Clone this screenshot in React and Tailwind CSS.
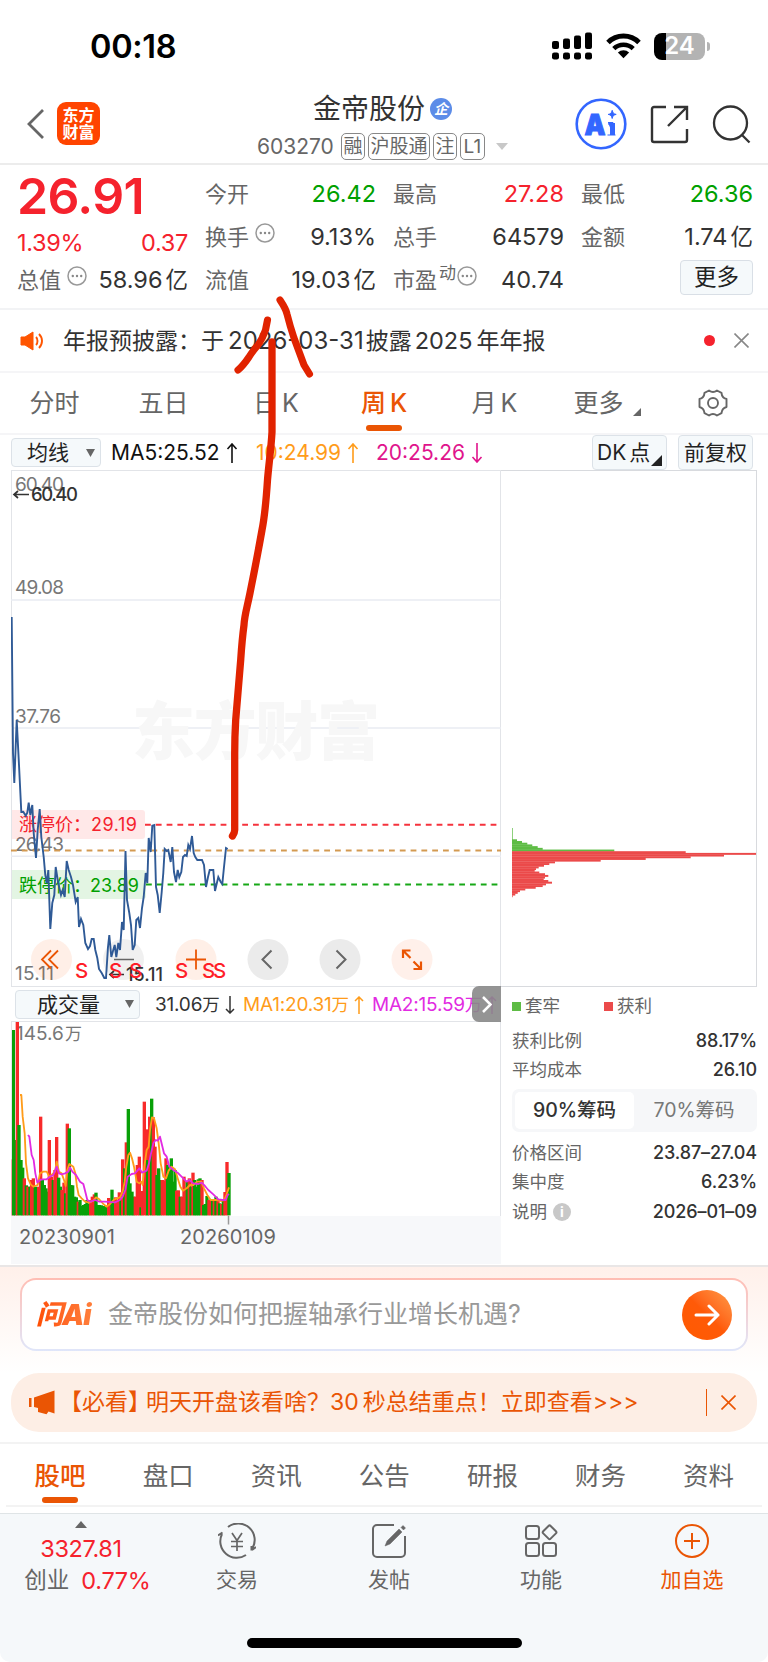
import React from 'react';

const priceLine =
    "11.7,617 13,753 14.3,783 16.7,720 19,765 21.3,812 23.3,811.7 25.7,815.7 27.3,812.7 28.7,802.7 30.3,815 32.3,805 33.7,833 36,858 37.7,830 39.7,809 41.3,837 43.7,857 45.3,875 47,883 48.3,870 50.3,929 52.3,903 54.3,895 55.7,867 58,882 61,895 62.7,890 64.7,897 66.7,861 68.7,870 71,877 73,885 75.7,902 77.7,897 79,927 81,919 83.3,925 85.3,943 88,949 90,946 91.7,939 93.7,939 95.3,950 97.3,958 99,969 101.7,973 104.3,978 106,978 108,947 109.3,935 111.3,957 114.7,945 116.3,957 118.3,943 120,950 122,922 123.7,930 125.5,851 127,900 129.3,913 131,925 132.7,950 134.7,945 136.3,920 138.3,918 140,928 142,908 143.7,897 145.7,873 147.3,883 148.7,838 150.7,852 152.3,825.7 154.3,825 156,887 157.7,895 159.7,913 161.7,892 163.3,873 164.7,849 166.7,851 168.3,850 170.7,862 172.3,847 174,872 176,882 177.7,870 179.3,877 181.3,872 183,857 185,855 186.7,856 188.3,845 190,849 192,836 193.7,853 195.3,857 197.3,860 202,860 204,865 206,887 208,877 209.7,870 213.3,870 215,891 218.3,877 220.7,882 222.3,884 224,867 226,848 227.7,849";

// [x, top, up] in chart pixels times three, baseline at 646
const volumes = [
    [38, 478, 1], [41, 90, 0], [47, 420, 0], [52, 66, 1], [57, 375, 0], [63, 480, 0], [68, 503, 0], [73, 535, 1], [79, 556, 0], [84, 560, 1],
    [90, 560, 0], [95, 540, 1], [100, 535, 1], [106, 560, 0], [111, 590, 0], [116, 560, 1], [122, 350, 1], [127, 540, 0], [133, 555, 0], [138, 565, 0],
    [143, 575, 0], [148, 420, 1], [154, 530, 1], [160, 540, 0], [165, 510, 1], [170, 411, 1], [176, 533, 0], [181, 560, 0], [186, 570, 1], [192, 548, 1],
    [197, 580, 0], [202, 371, 1], [208, 385, 0], [213, 555, 0], [218, 556, 0], [224, 590, 0], [229, 592, 0], [235, 605, 1], [240, 600, 0], [245, 618, 0],
    [251, 615, 0], [256, 612, 0], [261, 600, 0], [267, 612, 0], [272, 600, 1], [277, 590, 1], [283, 583, 1], [288, 578, 0], [294, 615, 0], [299, 615, 0],
    [304, 616, 0], [310, 618, 0], [315, 620, 0], [320, 620, 0], [326, 594, 1], [331, 605, 1], [336, 569, 0], [342, 600, 0], [347, 592, 1], [352, 600, 1],
    [358, 577, 1], [363, 600, 0], [368, 478, 1], [374, 505, 0], [379, 427, 1], [385, 327, 0], [390, 550, 0], [396, 575, 0], [401, 590, 0], [406, 590, 1],
    [412, 495, 1], [418, 470, 1], [423, 622, 0], [428, 573, 1], [433, 305, 1], [440, 388, 1], [443, 480, 0], [449, 350, 1], [455, 296, 0], [460, 352, 1],
    [465, 440, 1], [471, 525, 0], [476, 505, 0], [481, 540, 0], [487, 540, 1], [492, 542, 1], [498, 475, 1], [503, 495, 0], [508, 500, 0], [514, 475, 0],
    [519, 545, 0], [525, 510, 0], [530, 572, 1], [535, 571, 1], [541, 590, 0], [546, 590, 1], [552, 530, 1], [557, 570, 1], [562, 545, 0], [568, 535, 1],
    [573, 560, 0], [579, 518, 1], [584, 540, 0], [589, 560, 0], [595, 538, 0], [600, 535, 0], [606, 540, 1], [611, 615, 0], [616, 612, 0], [621, 588, 0],
    [627, 600, 1], [632, 598, 1], [638, 602, 0], [643, 600, 1], [648, 590, 0], [654, 600, 1], [659, 610, 0], [665, 612, 1], [670, 600, 0], [675, 576, 1],
    [681, 486, 1], [687, 519, 0],
];

const ma1 =
    "60,285 64,285 68,350 74,400 78,490 84,535 92,553 100,560 113,555 120,520 130,515 140,515 148,530 158,522 165,515 170,485 177,515 185,520 192,540 197,558 202,510 208,492 220,500 226,520 231,560 236,585 245,595 255,605 268,608 280,602 288,592 297,597 310,612 320,620 330,612 343,598 360,592 368,575 374,545 379,500 385,465 390,458 396,475 402,500 410,545 418,550 424,545 428,555 433,500 440,450 446,440 450,390 456,352 462,355 470,385 476,430 482,490 490,530 498,535 506,512 515,500 525,508 533,535 541,560 549,572 560,565 570,555 580,555 592,545 604,545 612,565 622,585 632,600 650,600 665,603 673,600 679,585 687,562";
const ma2 =
    "84,405 88,410 95,465 101,480 106,520 112,548 120,540 128,538 140,538 150,530 160,525 170,500 177,520 185,523 195,520 205,515 210,502 217,515 228,525 240,545 250,552 257,580 262,600 272,605 285,600 298,605 315,605 345,607 360,600 368,590 376,570 383,530 395,522 405,520 418,505 426,518 440,512 447,490 452,465 460,430 467,420 473,422 480,410 486,435 492,460 500,470 508,500 520,510 535,520 550,535 560,545 568,540 580,550 595,552 605,548 615,558 625,570 640,583 655,598 668,600 677,600 683,585 687,582";

const greenChips = [5, 10, 15.3, 20.3, 25.7, 30.7, 102.3];
const redChips = [173.7, 244, 212, 178.7, 133.7, 88.7, 43, 37.3, 32, 26.7, 24, 22.7, 27.3, 33, 36.3, 33, 31.7, 36.3, 40, 34, 30.7, 23.7, 13.3, 8, 5.7, 3.3, 0.7];

const Dots = ({ className = "" }) => (
    <svg className={`shrink-0 ${className}`} width="20" height="20" viewBox="0 0 20 20" fill="none">
        <circle cx="10" cy="10" r="9" stroke="#999" strokeWidth="1.5" />
        <circle cx="5.8" cy="10" r="1.2" fill="#888" />
        <circle cx="10" cy="10" r="1.2" fill="#888" />
        <circle cx="14.2" cy="10" r="1.2" fill="#888" />
    </svg>
);

const Cross = ({ size = 15, color = "#888" }) => (
    <svg width={size} height={size} viewBox="0 0 15 15" stroke={color} strokeWidth="1.6">
        <path d="M.5.5l14 14M14.5.5l-14 14" />
    </svg>
);

const StatusBar = () => (
    <div className="flex h-[80px] items-start justify-between pl-[90px] pr-[58px] pt-[30px]">
        <span className="text-[32.5px] font-semibold leading-[34px] tracking-[-0.3px] text-black">00:18</span>
        <div className="flex items-center gap-[13px] pt-[2px]">
            <svg width="41" height="28" viewBox="0 0 41 28">
                {[0, 11, 22, 33].map((x, i) => (
                    <g key={x}>
                        <rect x={x} y={[9, 6.5, 3.5, 0.5][i]} width="7" height={[8, 10.5, 13.5, 16.5][i]} rx="2" />
                        <rect x={x} y="20.5" width="7" height="7" rx="2.2" />
                    </g>
                ))}
            </svg>
            <svg width="35" height="26" viewBox="0 0 35 26" fill="none" stroke="#000" strokeWidth="5">
                <path d="M2 9.5a22 22 0 0 1 31 0" />
                <path d="M7.8 15.7a14 14 0 0 1 19.4 0" strokeWidth="4.6" />
                <path d="M17.5 25.3l-5.6-5.8a8 8 0 0 1 11.2 0z" fill="#000" stroke="none" />
            </svg>
            <div className="flex items-center gap-[2px]">
                <div className="flex h-[27px] w-[51px] items-center justify-center overflow-hidden rounded-[8px] bg-[linear-gradient(90deg,#000_24%,#b3b3b3_24%)] text-[24px] font-semibold leading-none text-white">24</div>
                <div className="h-[9px] w-[3px] rounded-r-full bg-[#b3b3b3]" />
            </div>
        </div>
    </div>
);

const Tag = ({ children }) => (
    <span className="flex h-[27px] items-center rounded-[5px] border border-[#888] px-[1.5px] text-[19px] leading-none text-[#666]">{children}</span>
);

const Header = () => (
    <div className="flex h-[85px] items-start border-b-2 border-[#ececec] pl-[26px] pr-[17px]">
        <div className="flex w-[231px] items-center gap-[12px] pt-[22px]">
            <svg width="19" height="32" viewBox="0 0 19 32" fill="none" stroke="#666" strokeWidth="2.8">
                <path d="M17 2L3 16l14 14" />
            </svg>
            <div className="flex h-[43px] w-[43px] flex-col items-center justify-center rounded-[9px] bg-[#ff4400] text-[16px] font-bold leading-[17px] text-white">
                <span>东方</span>
                <span>财富</span>
            </div>
        </div>
        <div className="flex w-[255px] flex-col">
            <div className="flex items-center gap-[5px] pl-[56px] pt-[14px]">
                <span className="text-[28px] leading-[30px] text-[#333]">金帝股份</span>
                <span className="flex h-[22px] w-[22px] items-center justify-center rounded-full bg-[#5c8ce8] text-[14px] font-bold italic leading-none text-white">企</span>
            </div>
            <div className="mt-[9px] flex items-center gap-[3px]">
                <span className="mr-[3px] w-[78px] text-[21px] leading-none text-[#666]">603270</span>
                <Tag>融</Tag>
                <Tag>沪股通</Tag>
                <Tag>注</Tag>
                <Tag><span className="px-[1px]">L1</span></Tag>
                <svg className="ml-[8px]" width="12" height="7" viewBox="0 0 12 7"><path d="M0 0h12L6 7z" fill="#c8c8c8" /></svg>
            </div>
        </div>
        <div className="ml-auto flex items-center pt-[18px]">
            <svg width="52" height="52" viewBox="0 0 52 52">
                <circle cx="26" cy="26" r="24.3" fill="none" stroke="#3366ff" strokeWidth="2.6" />
                <text x="9.5" y="37" fontSize="29" fontWeight="900" fill="#3366ff" stroke="#3366ff" strokeWidth="1" textLength="21" lengthAdjust="spacingAndGlyphs">A</text>
                <path d="M33 24.500h5V37M32.500 37h8M37.200 12.300c.7 2.900 1.500 3.600 4 4.100-2.500.5-3.300 1.200-4 4.100-.7-2.900-1.500-3.600-4-4.100 2.500-.5 3.300-1.200 4-4.100z" fill="#3366ff" stroke="#3366ff" strokeWidth="1" strokeLinejoin="round" />
                <path d="M33.500 25.500h3V37M38.500 25v12" fill="none" stroke="#3366ff" strokeWidth="3" />
            </svg>
            <svg className="ml-[23px]" width="39" height="39" viewBox="0 0 39 39" fill="none" stroke="#333" strokeWidth="2.4">
                <path d="M16 2H4a2 2 0 0 0-2 2v31a2 2 0 0 0 2 2h31a2 2 0 0 0 2-2V24M18 21L36.5 2.5M24 2h13v13" />
            </svg>
            <svg className="ml-[23px]" width="39" height="39" viewBox="0 0 39 39" fill="none" stroke="#333" strokeWidth="2.3">
                <circle cx="18.5" cy="18" r="16.5" />
                <path d="M29.5 29.5l8 8" />
            </svg>
        </div>
    </div>
);

const Stat = ({ label, value, unit, color = "text-[#333]", dots, sup }) => (
    <div className="flex h-[43px] items-center justify-between">
        <span className="flex items-center text-[22px] leading-none text-[#666]">
            {label}
            {sup && <span className="-mt-[12px] ml-[2px] text-[17px]">{sup}</span>}
            {dots && <Dots className={sup ? "-mt-[8px] ml-[1px]" : "-mt-[8px] ml-[6px]"} />}
        </span>
        <span className={`text-[23.5px] leading-none ${color}`}>
            {value}
            {unit && <span className="ml-[3px] text-[22.5px]">{unit}</span>}
        </span>
    </div>
);

const Quote = () => (
    <div className="flex h-[145px] gap-[17px] border-b-2 border-[#f2f3f5] pl-[17px] pr-[15px] pt-[7px]">
        <div className="w-[171px]">
            <div className="pt-[5px] text-[50px] font-semibold leading-[38px] tracking-[-0.6px] text-[#f5222d]">26.91</div>
            <div className="flex justify-between pt-[16px] text-[23.5px] leading-[23px] tracking-[-0.3px] text-[#f5222d]">
                <span>1.39%</span>
                <span>0.37</span>
            </div>
            <div className="pt-[4px]"><Stat label="总值" value="58.96" unit="亿" dots /></div>
        </div>
        <div className="w-[171px]">
            <Stat label="今开" value="26.42" color="text-[#00a000]" />
            <Stat label="换手" value="9.13%" dots />
            <Stat label="流值" value="19.03" unit="亿" />
        </div>
        <div className="w-[171px]">
            <Stat label="最高" value="27.28" color="text-[#f5222d]" />
            <Stat label="总手" value="64579" />
            <Stat label="市盈" sup="动" value="40.74" dots />
        </div>
        <div className="w-[172px]">
            <Stat label="最低" value="26.36" color="text-[#00a000]" />
            <Stat label="金额" value="1.74" unit="亿" />
            <div className="flex justify-end pt-[2px]">
                <button className="h-[35px] w-[73px] rounded-[4px] border border-[#d9dfe6] bg-[#f5f9fb] text-[22.5px] leading-none text-[#222]">更多</button>
            </div>
        </div>
    </div>
);

const Notice = () => (
    <div className="flex h-[63px] items-center border-b-2 border-[#f5f5f7] pl-[20px] pr-[19px]">
        <svg width="24" height="20" viewBox="0 0 24 20" fill="none" stroke="#ff5500" strokeWidth="1.9">
            <path d="M1 6h4l8-5v18l-8-5H1z" fill="#ff5500" strokeLinejoin="round" strokeWidth="1" />
            <path d="M16 6c2 2 2 6 0 8M19 3c4 4 4 10 0 14" />
        </svg>
        <span className="ml-[19px] whitespace-pre text-[23px] leading-none text-[#333]">年报预披露：于<span className="ml-[4px] mr-[2px] text-[24px]">2026-03-31</span>披露<span className="ml-[3px] mr-[4px] text-[23.5px]">2025</span>年年报</span>
        <span className="ml-auto mr-[19px] h-[11px] w-[11px] rounded-full bg-[#f5222d]" />
        <Cross />
    </div>
);

const periods = [
    { label: "分时", w: "w-[109px]" },
    { label: "五日", w: "w-[109px]" },
    { label: "日K", w: "w-[116px]" },
    { label: "周K", w: "w-[100px]", active: true },
    { label: "月K", w: "w-[121px]" },
    { label: "更多", w: "w-[87px]" },
];

const PeriodTabs = () => (
    <div className="flex h-[62px] items-center border-b-2 border-[#f5f5f7]">
        {periods.map((p) => (
            <div key={p.label} className={`relative flex justify-center text-[25px] leading-none ${p.w} ${p.active ? "font-medium text-[#ea5504]" : "text-[#666]"}`}>
                {p.label === "更多" ? <span>{p.label}</span> : p.label.replace("K", "")}
                {p.label.includes("K") && <span className="ml-[4px]">K</span>}
                {p.active && <span className="absolute -bottom-[15px] h-[6px] w-[36px] rounded-[3px] bg-[#ea5504]" />}
            </div>
        ))}
        <svg className="-ml-[9px] mt-[17px]" width="8" height="8" viewBox="0 0 8 8"><path d="M8 0v8H0z" fill="#666" /></svg>
        <svg className="ml-[57px]" width="30" height="28" viewBox="0 0 30 28" fill="none" stroke="#666" strokeWidth="1.9" strokeLinejoin="round">
            <path d="M11 1.5q4 3 8 0l4.5 2.3q.4 5 5 6.2v8q-4.600 1.200-5 6.200l-4.500 2.300q-4-3-8 0l-4.500-2.300q-.4-5-5-6.200v-8q4.600-1.200 5-6.200z" />
            <circle cx="15" cy="14" r="5" />
        </svg>
    </div>
);

const Arrow = ({ down }) => (
    <svg className="ml-[6px] inline-block align-[-3px]" width="12" height="20" viewBox="0 0 12 20" fill="none" stroke="currentColor" strokeWidth="1.6">
        <path d={down ? "M6 0v19M1.500 14l4.500 5 4.500-5" : "M6 20V1M1.500 6L6 1l4.500 5"} />
    </svg>
);

const Toolbar = () => (
    <div className="flex h-[35px] items-center pl-[11px] pr-[15px]">
        <button className="flex h-[29px] w-[90px] items-center justify-between rounded-[4px] border border-[#dce2e8] bg-[#f5f9fb] pl-[15px] pr-[5px] text-[21px] leading-none text-[#222]">
            均线
            <svg width="9" height="8" viewBox="0 0 9 8"><path d="M0 0h9L4.500 8z" fill="#666" /></svg>
        </button>
        <div className="flex text-[21px] leading-none">
            <span className="ml-[10px] w-[145px] text-[#111]">MA5:25.52<Arrow /></span>
            <span className="w-[120px] text-[#ff9c1a]">10:24.99<Arrow /></span>
            <span className="w-[110px] text-[#e0148c]">20:25.26<Arrow down /></span>
        </div>
        <button className="relative ml-auto flex h-[35px] w-[75px] items-center rounded-[4px] border border-[#dce2e8] bg-[#f5f9fb] pl-[4px] text-[21px] leading-none text-[#222]">
            DK<span className="ml-[3px]">点</span>
            <svg className="absolute bottom-[3px] right-[4px]" width="11" height="11" viewBox="0 0 11 11"><path d="M11 0v11H0z" fill="#222" /></svg>
        </button>
        <button className="ml-[11px] h-[35px] w-[75px] rounded-[4px] border border-[#dce2e8] bg-[#f5f9fb] text-[21px] leading-none text-[#222]">前复权</button>
    </div>
);

const PriceChart = () => (
    <svg className="block" width="490" height="517" viewBox="11 470 490 517" fill="none">
        <path d="M11 470.500h490M11.500 470v517M500.500 470v517M11 986.500h490" stroke="#e2e4e8" />
        <path d="M11 600h490M11 728h490M11 856.300h490" stroke="#e9ebf2" strokeWidth="1.500" />
        <text x="132" y="754" fontSize="63" fontWeight="900" fill="#f7f7f7" textLength="248">东方财富</text>
        <g fontSize="19" fill="#777">
            <text x="15" y="491" textLength="49">60.40</text>
            <text x="15" y="594" textLength="49">49.08</text>
            <text x="15" y="723" textLength="46">37.76</text>
            <text x="15" y="851" textLength="49">26.43</text>
            <text x="15" y="979.500" textLength="39">15.11</text>
        </g>
        <path d="M29 494.500H14M18 491l-4 3.500 4 3.500" stroke="#333" strokeWidth="1.700" />
        <text x="31" y="500.500" fontSize="18.500" fontWeight="500" fill="#333" textLength="47">60.40</text>
        <path d="M12 810h130a3 3 0 0 1 3 3v23a3 3 0 0 1-3 3H12z" fill="#ff2a2a" fillOpacity=".11" />
        <path d="M12 870h131a3 3 0 0 1 3 3v23a3 3 0 0 1-3 3H12z" fill="#00a000" fillOpacity=".11" />
        <text x="19" y="831" fontSize="18" fill="#f5222d">涨停价：<tspan x="91" textLength="46">29.19</tspan></text>
        <text x="19" y="891.500" fontSize="18" fill="#00a000">跌停价：<tspan x="90" textLength="49">23.89</tspan></text>
        <path d="M145 824.700h356" stroke="#f5323c" strokeWidth="1.900" strokeDasharray="5.800 5" />
        <path d="M11 850.500h490" stroke="#d39a52" strokeWidth="1.900" strokeDasharray="5.800 5" />
        <path d="M146 884.500h353" stroke="#17a817" strokeWidth="1.900" strokeDasharray="5.800 5" />
        <g>
            <circle cx="51.500" cy="959.500" r="20.500" fill="#ff6414" fillOpacity=".1" />
            <circle cx="123.500" cy="959.500" r="20.500" fill="#000" fillOpacity=".06" />
            <circle cx="196" cy="959.500" r="20.500" fill="#ff6414" fillOpacity=".1" />
            <circle cx="268" cy="959.500" r="20.500" fill="#ebebeb" />
            <circle cx="340" cy="959.500" r="20.500" fill="#ebebeb" />
            <circle cx="412" cy="959.500" r="20.500" fill="#fff0ea" />
            <path d="M51 950.500l-9 9 9 9M58 950.500l-9 9 9 9M186 959.500h20M196 949.500v20" stroke="#ea5504" strokeWidth="1.800" />
            <path d="M114 959.500h20" stroke="#666" strokeWidth="1.500" />
            <path d="M271.500 950.500l-9 9 9 9M336.500 950.500l9 9-9 9" stroke="#666" strokeWidth="2" />
            <path d="M403 958v-7.500h7.500M403 950.500l7.500 7.500M421 961.500v7.500h-7.500M421 969l-7.500-7.500" stroke="#ea5504" strokeWidth="2.200" />
        </g>
        <polyline points={priceLine} stroke="#2f5a96" strokeWidth="1.900" strokeLinejoin="miter" strokeMiterlimit="4" />
        <path d="M124 974.500h-14M114 971l-4 3.500 4 3.500" stroke="#333" strokeWidth="1.700" />
        <text x="126" y="981" fontSize="18" fontWeight="500" fill="#333" textLength="37">15.11</text>
        <g fontSize="20.500" fontWeight="500" fill="#ff1e28">
            {[75, 109, 129, 175, 202, 213].map((x) => (
                <text key={x} x={x} y="978">S</text>
            ))}
        </g>
    </svg>
);

const VolumeChart = () => (
    <svg className="block" width="490" height="204" viewBox="11 1021 490 204" fill="none">
        <path d="M11 1216h490v9H11z" fill="#f7f8fa" />
        <path d="M11 1021.500h490M11.500 1021v195M500.500 1021v195" stroke="#e2e4e8" />
        <text x="16" y="1039.500" fontSize="19" fill="#777">145.6<tspan x="65" fontSize="17">万</tspan></text>
        <g transform="translate(0 1000) scale(.33333)">
            {volumes.map(([x, top, up]) => (
                <rect key={x} x={Math.max(x - 5, 35)} y={top} width={x < 45 ? 9 : 10} height={646 - top} fill={up ? "#f82a2a" : "#08a008"} />
            ))}
            <polyline points={ma1} stroke="#ff9c1a" strokeWidth="5.500" strokeLinejoin="round" />
            <polyline points={ma2} stroke="#e22be2" strokeWidth="5.500" strokeLinejoin="round" />
        </g>
        <path d="M228.500 1216v8.500" stroke="#999" strokeWidth="1.500" />
    </svg>
);

const ChipChart = () => (
    <svg className="block" width="257" height="517" viewBox="501 470 257 517">
        <path d="M501 470.500h256M756.500 470v517M501 986.500h256" stroke="#d8dade" fill="none" />
        <rect x="512" y="828" width=".7" height="12" fill="#5ebc45" />
        {greenChips.map((w, i) => (
            <rect key={i} x="512" y={839.3 + i * 1.71} width={w} height="2" fill="#5ebc45" />
        ))}
        {redChips.map((w, i) => (
            <rect key={i} x="512" y={851.2 + i * 1.695} width={w} height="1.950" fill="#eb4a4a" />
        ))}
    </svg>
);

const SmallArrow = ({ down }) => (
    <svg className="ml-[5px] inline-block align-[-3px]" width="10" height="18" viewBox="0 0 10 18" fill="none" stroke="currentColor" strokeWidth="1.500">
        <path d={down ? "M5 0v17M1 13l4 4 4-4" : "M5 18V1M1 5l4-4 4 4"} />
    </svg>
);

const VolumeBar = () => (
    <div className="flex h-[34px] items-center pl-[4px]">
        <button className="flex h-[29px] w-[125px] items-center justify-between rounded-[4px] border border-[#dce2e8] bg-[#f5f9fb] pl-[21px] pr-[5px] text-[21px] leading-none text-[#222]">
            成交量
            <svg width="9" height="8" viewBox="0 0 9 8"><path d="M0 0h9L4.500 8z" fill="#666" /></svg>
        </button>
        <div className="flex whitespace-nowrap text-[19px] leading-none tracking-[-0.2px]">
            <span className="ml-[15px] w-[88px] text-[#333]">31.06<span className="text-[17.5px]">万</span><SmallArrow down /></span>
            <span className="w-[129px] text-[#ff9c1a]">MA1:20.31<span className="text-[17.5px]">万</span><SmallArrow /></span>
            <span className="w-[129px] text-[#e22be2]">MA2:15.59<span className="text-[17.5px]">万</span><SmallArrow /></span>
        </div>
        <div className="z-10 -ml-[29px] flex h-[36px] w-[29px] shrink-0 items-center justify-center rounded-l-[7px] bg-[#888]/90">
            <svg width="10" height="17" viewBox="0 0 10 17" fill="none" stroke="#fff" strokeWidth="2.500"><path d="M1 1l7.500 7.500L1 16" /></svg>
        </div>
    </div>
);

const Row = ({ label, value, children }) => (
    <div className="flex h-[29px] items-center justify-between leading-none">
        <span className="flex items-center text-[17.5px] text-[#666]">{label}{children}</span>
        <span className="text-[18px] font-medium tracking-[-0.1px] text-[#333]">{value}</span>
    </div>
);

const ChipPanel = () => (
    <div className="pl-[11px] pr-[1px]">
        <div className="flex h-[38px] items-center text-[17.5px] leading-none text-[#666]">
            <span className="mr-[4px] h-[9px] w-[9px] bg-[#5ebc45]" />套牢
            <span className="ml-[44px] mr-[4px] h-[9px] w-[9px] bg-[#eb4a4a]" />获利
        </div>
        <div className="pt-[1px]">
            <Row label="获利比例" value="88.17%" />
            <Row label="平均成本" value="26.10" />
        </div>
        <div className="mt-[5px] flex h-[43px] rounded-[7px] bg-[#f6f7f9] p-[3px] text-[19.5px] leading-none">
            <div className="flex w-[119px] items-center justify-center rounded-[5px] bg-white font-medium text-[#333]">90%筹码</div>
            <div className="flex flex-1 items-center justify-center text-[#777]">70%筹码</div>
        </div>
        <div className="pt-[6px]">
            <Row label="价格区间" value="23.87–27.04" />
            <Row label="集中度" value="6.23%" />
            <div className="pt-[1px]">
                <Row label="说明" value="2026–01–09">
                    <span className="ml-[6px] flex h-[18px] w-[18px] items-center justify-center rounded-full bg-[#c8c8c8] text-[14px] font-bold leading-none text-white">i</span>
                </Row>
            </div>
        </div>
    </div>
);

const Charts = () => (
    <div className="flex h-[795px] pl-[11px]">
        <div className="w-[490px]">
            <PriceChart />
            <VolumeBar />
            <VolumeChart />
            <div className="flex h-[39px] items-start bg-[#f7f8fa] pl-[8px] pt-[2px] text-[20px] leading-none text-[#666]">
                <span className="w-[161px] tracking-[0.1px]">20230901</span>
                <span className="tracking-[0.1px]">20260109</span>
            </div>
        </div>
        <div className="w-[257px]">
            <ChipChart />
            <ChipPanel />
        </div>
    </div>
);

const AskAi = () => (
    <div className="h-[108px] border-t-2 border-[#e9e6e6] bg-gradient-to-b from-[#fff0ea] to-white px-[20px] pt-[11px]">
        <div className="h-[73px] rounded-[16px] bg-gradient-to-b from-[#ffbdb3] to-[#dfe6fa] p-[2px]">
            <div className="flex h-full items-center rounded-[14px] bg-white pl-[14px] pr-[14px]">
                <span className="flex w-[72px] items-center bg-gradient-to-r from-[#ff4d00] to-[#ff8a45] bg-clip-text text-[28px] font-black italic leading-[34px] tracking-[-1px] text-transparent">
                    <span className="text-[27px]">问</span>Ai
                </span>
                <span className="text-[25px] leading-none text-[#999]">金帝股份如何把握轴承行业增长机遇?</span>
                <span className="ml-auto flex h-[50px] w-[50px] items-center justify-center rounded-full bg-gradient-to-bl from-[#ff9a45] via-[#ff5a08] to-[#ff5a00]">
                    <svg width="26" height="22" viewBox="0 0 26 22" fill="none" stroke="#fff" strokeWidth="3" strokeLinecap="round" strokeLinejoin="round"><path d="M2 11h22M15 2l9 9-9 9" /></svg>
                </span>
            </div>
        </div>
    </div>
);

const Banner = () => (
    <div className="mx-[11px] flex h-[59px] items-center rounded-[28px] bg-[#fdeee5] pl-[18px] pr-[21px] text-[#ea5504]">
        <svg width="27" height="25" viewBox="0 0 27 25" fill="currentColor">
            <path d="M0 8h2.500v9H0zM5 7.500L25.500.5v23l-6-2-2 2.700-8.500-2.200V18l-4-1z" />
        </svg>
        <span className="ml-[3px] flex whitespace-nowrap text-[23px] leading-none">
            <span>【必看】</span>
            <span className="-ml-[5px]">明天开盘该看啥？30</span>
            <span className="ml-[4px]">秒总结重点！立即查看&gt;&gt;&gt;</span>
        </span>
        <span className="ml-auto mr-[14px] h-[27px] w-[1.5px] bg-[#ea5504]" />
        <Cross size={15} color="#ea5504" />
    </div>
);

const sections = ["股吧", "盘口", "资讯", "公告", "研报", "财务", "资料"];

const SectionTabs = () => (
    <div className="mt-[10px] border-t-2 border-[#f3f3f3] px-[6px]">
        <div className="flex h-[63px] border-b-2 border-[#f3f3f3]">
            {sections.map((s, i) => (
                <div key={s} className={`relative flex w-[108.1px] shrink-0 justify-center pt-[18px] text-[25.5px] leading-[27px] ${i === 0 ? "font-medium text-[#ea5504]" : "text-[#666]"}`}>
                    {s}
                    {i === 0 && <span className="absolute bottom-[2px] h-[6px] w-[36px] rounded-[3px] bg-[#ea5504]" />}
                </div>
            ))}
        </div>
    </div>
);

const NavItem = ({ label, width, color = "text-[#666]", children }) => (
    <div className={`flex flex-col items-center pt-[9px] text-[21px] leading-[24px] ${width} ${color}`}>
        <svg className="mb-[9px]" width="38" height="36" viewBox="0 0 38 36" fill="none" stroke="currentColor" strokeWidth="2">{children}</svg>
        {label}
    </div>
);

const BottomNav = () => (
    <div className="mt-[6px] h-[149px] rounded-b-[10px] border-t border-[#dfe4e6] bg-[#f5f8fa]">
        <div className="flex h-[124px]">
            <div className="flex w-[162px] flex-col items-center pt-[7px] leading-none">
                <svg width="12" height="7" viewBox="0 0 12 7"><path d="M0 7h12L6 0z" fill="#666" /></svg>
                <span className="mt-[9px] text-[23.5px] tracking-[-0.4px] text-[#f5222d]">3327.81</span>
                <span className="mt-[8px] flex items-center gap-[12px] pl-[13px] text-[22.5px]">
                    <span className="text-[#666]">创业</span>
                    <span className="text-[23.5px] tracking-[-0.3px] text-[#f5222d]">0.77%</span>
                </span>
            </div>
            <NavItem label="交易" width="w-[150px]">
                <path d="M10 4a16.500 16.500 0 0 1 24 22M28 32A16.500 16.500 0 0 1 4 11M0 12.500L4.500 9.500M34 27l4-3M33.500 23v4.500" />
                <path d="M14 10l5 7.500 5-7.500M19 17v11M13 18.500h12M13 23.500h12" strokeWidth="1.700" />
            </NavItem>
            <NavItem label="发帖" width="w-[154px]">
                <path d="M24 2H7a4 4 0 0 0-4 4v24a4 4 0 0 0 4 4h24a4 4 0 0 0 4-4V13" />
                <path d="M15 23l2-5L29 6l3 3-12 12zM31 4.500L33 2.500l2.500 2.500-2 2z" fill="currentColor" strokeWidth=".5" />
            </NavItem>
            <NavItem label="功能" width="w-[150px]">
                <rect x="4" y="3" width="13" height="13" rx="2.500" />
                <rect x="4" y="20" width="13" height="13" rx="2.500" />
                <rect x="21" y="20" width="13" height="13" rx="2.500" />
                <rect x="22.300" y="4" width="10.500" height="10.500" rx="1.500" transform="rotate(45 27.500 9.300)" />
            </NavItem>
            <NavItem label="加自选" width="w-[152px]" color="text-[#ea5504]">
                <circle cx="19" cy="18" r="16" />
                <path d="M11 18h16M19 10v16" />
            </NavItem>
        </div>
        <div className="mx-auto h-[10px] w-[275px] rounded-full bg-black" />
    </div>
);

const HandArrow = () => (
    <svg className="pointer-events-none absolute left-0 top-0" width="768" height="900" viewBox="0 0 768 900" fill="none" stroke="#e12300" strokeLinecap="round" strokeLinejoin="round">
        <path d="M272 342L272 432C271 450 269 462 267.500 480C266 503 265 515 262 530C259 547 254 573 250 593C247 608 244.500 615 244 625C242 640 241.500 648 240.700 660L235.700 720C234.500 740 234.700 745 234.700 760V830Q234.700 833 232.500 836" strokeWidth="7.300" />
        <path d="M267.500 320L265.500 330Q263 338 258 345Q252 352 249 357Q243 366 238 370M280 300Q286 309 287 314Q290 326 294 338L304 365L309.500 374" strokeWidth="7.100" />
    </svg>
);

const App = () => (
    <div className="relative w-[768px] overflow-hidden bg-white font-['Inter','Noto_Sans_CJK_SC',sans-serif]" lang="zh-CN">
        <StatusBar />
        <Header />
        <Quote />
        <Notice />
        <PeriodTabs />
        <Toolbar />
        <Charts />
        <AskAi />
        <Banner />
        <SectionTabs />
        <BottomNav />
        <HandArrow />
    </div>
);

export default App;
